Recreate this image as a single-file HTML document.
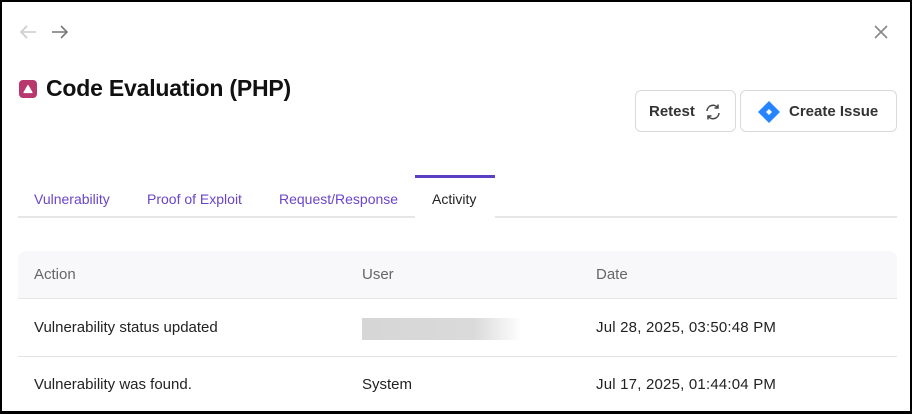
<!DOCTYPE html>
<html><head><style>
*{margin:0;padding:0;box-sizing:border-box}
body{width:912px;height:414px;overflow:hidden;background:#fff;font-family:"Liberation Sans",sans-serif;position:relative}
.frame{position:absolute;left:0;top:0;width:912px;height:414px;border:2px solid #000;border-right-width:2px;border-bottom-width:3px}
.abs{position:absolute}
.tab{position:absolute;top:191px;font-size:14px;color:#6a45c8}
.th{position:absolute;top:266px;font-size:15px;color:#666}
.td{position:absolute;font-size:15px;color:#222}
.btn{position:absolute;top:90px;height:42px;border:1px solid #d9d9d9;border-radius:6px;background:#fff;font-size:15px;font-weight:bold;color:#333}
</style></head><body>
<svg class="abs" style="left:18px;top:23px" width="20" height="18" viewBox="0 0 20 18"><path d="M18 9H3M9 3L3 9l6 6" stroke="#ccc" stroke-width="1.6" fill="none"/></svg>
<svg class="abs" style="left:50px;top:23px" width="20" height="18" viewBox="0 0 20 18"><path d="M2 9h15M11 3l6 6-6 6" stroke="#777" stroke-width="1.6" fill="none"/></svg>
<svg class="abs" style="left:873px;top:24px" width="16" height="16" viewBox="0 0 16 16"><path d="M2 2l12 12M14 2L2 14" stroke="#888" stroke-width="1.6"/></svg>
<div class="abs" style="left:19px;top:80px;width:18px;height:18px;border-radius:4px;background:#b8386d"></div>
<svg class="abs" style="left:22px;top:83px" width="12" height="12" viewBox="0 0 12 12"><path d="M6 2.5L10 9.5H2Z" fill="#fff" stroke="#fff" stroke-linejoin="round" stroke-width="1.2"/></svg>
<div class="abs" style="left:46px;top:75px;font-size:23px;font-weight:bold;color:#111;letter-spacing:-0.2px">Code Evaluation (PHP)</div>
<div class="btn" style="left:635px;width:101px"><span class="abs" style="left:13px;top:12px">Retest</span>
<svg class="abs" style="left:68px;top:12px" width="18" height="18" viewBox="0 0 18 18" fill="none" stroke="#444" stroke-width="1.5"><path d="M3 8a6 6 0 0 1 11-3M15 10a6 6 0 0 1-11 3"/><path d="M14 1.5V5h-3.5M4 16.5V13h3.5"/></svg></div>
<div class="btn" style="left:740px;width:157px">
<svg class="abs" style="left:16px;top:9px" width="24" height="24" viewBox="0 0 24 24"><path d="M12 1L23 12 12 23 1 12Z" fill="#2684ff"/><path d="M12 9l3 3-3 3-3-3Z" fill="#fff"/></svg>
<span class="abs" style="left:48px;top:12px">Create Issue</span></div>
<div class="abs" style="left:18px;top:216px;width:879px;height:2px;background:#e6e6e6"></div>
<div class="abs" style="left:415px;top:175px;width:80px;height:3px;background:#5b3fc4"></div>
<div class="abs" style="left:415px;top:178px;width:80px;height:40px;background:#fff"></div>
<div class="tab" style="left:34px">Vulnerability</div>
<div class="tab" style="left:147px">Proof of Exploit</div>
<div class="tab" style="left:279px">Request/Response</div>
<div class="tab" style="left:432px;color:#222">Activity</div>
<div class="abs" style="left:18px;top:251px;width:879px;height:48px;background:#f8f8fa;border-radius:8px 8px 0 0;border-bottom:1px solid #e6e6e6"></div>
<div class="th" style="left:34px">Action</div>
<div class="th" style="left:362px">User</div>
<div class="th" style="left:596px">Date</div>
<div class="td" style="left:34px;top:319px">Vulnerability status updated</div>
<div class="abs" style="left:362px;top:318px;width:160px;height:22px;background:linear-gradient(90deg,#d6d6d6 0%,#dadada 70%,#fff 100%)"></div>
<div class="td" style="left:596px;top:319px;letter-spacing:0.2px">Jul 28, 2025, 03:50:48 PM</div>
<div class="abs" style="left:18px;top:356px;width:879px;height:1px;background:#e3e3e3"></div>
<div class="td" style="left:34px;top:376px">Vulnerability was found.</div>
<div class="td" style="left:362px;top:376px">System</div>
<div class="td" style="left:596px;top:376px;letter-spacing:0.2px">Jul 17, 2025, 01:44:04 PM</div>
<div class="frame"></div>
</body></html>
